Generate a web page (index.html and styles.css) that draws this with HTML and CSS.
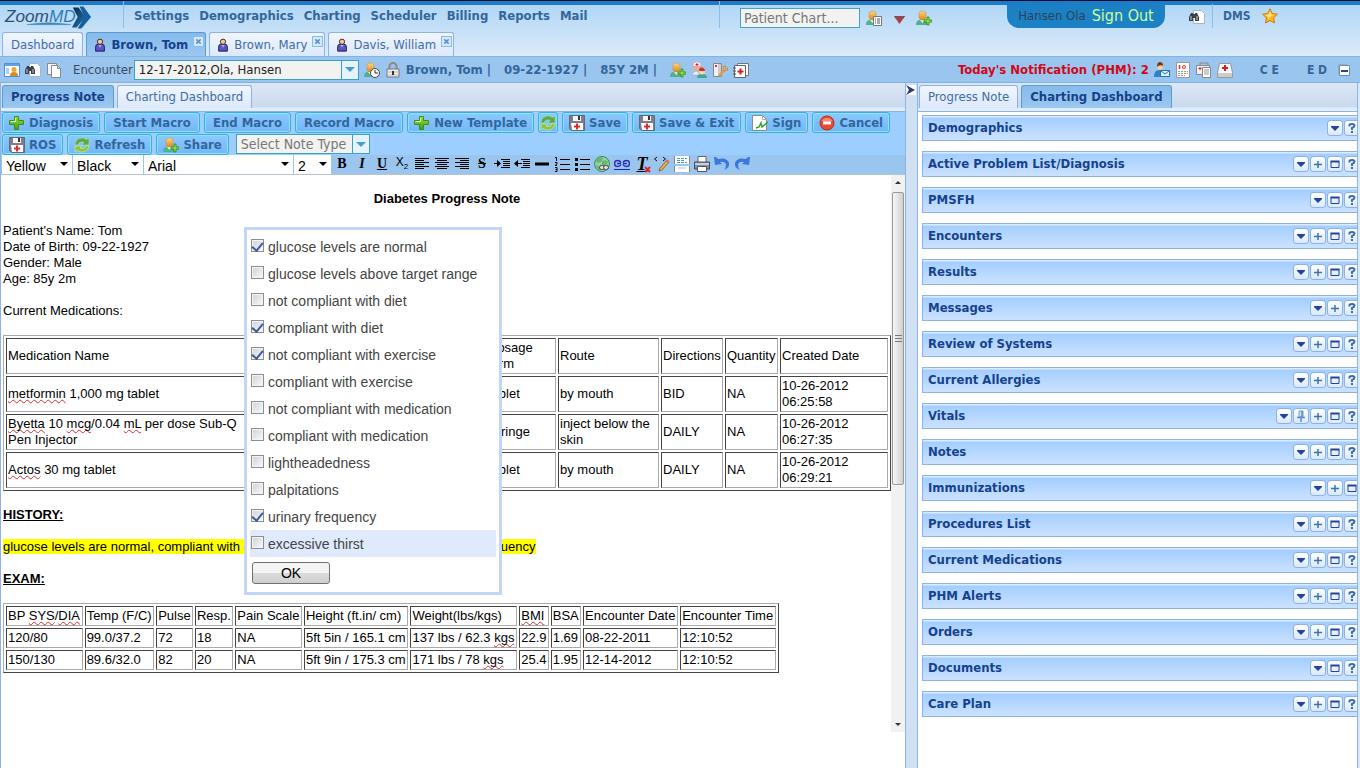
FILE: index.html
```html
<!DOCTYPE html>
<html lang="en">
<head>
<meta charset="utf-8">
<title>ZoomMD - Progress Note</title>
<link rel="stylesheet" href="styles.css">
</head>
<body>
<svg class="sprite" aria-hidden="true">
  <linearGradient id="gold" x1="0" y1="0" x2="0" y2="1"><stop offset="0" stop-color="#ffd488"/><stop offset="1" stop-color="#d98a1e"/></linearGradient>
  <linearGradient id="green" x1="0" y1="0" x2="0" y2="1"><stop offset="0" stop-color="#9be03f"/><stop offset="1" stop-color="#3aa010"/></linearGradient>
  <linearGradient id="navy" x1="0" y1="0" x2="1" y2="1"><stop offset="0" stop-color="#0c2038"/><stop offset="1" stop-color="#1f7fc0"/></linearGradient>
  <symbol id="person" viewBox="0 0 16 16"><path d="M3 15v-5q0-3 3-3h4q3 0 3 3v5z" fill="#5a55c4" stroke="#151540"/><path d="M6 8l2 3 2-3z" fill="#a9a6f0"/><circle cx="8" cy="4.300" r="3" fill="#f3c99a" stroke="#2a1a10"/></symbol>
  <symbol id="xmark" viewBox="0 0 10 10"><rect x=".5" y=".5" width="9" height="9" fill="#d9ebfc" stroke="#8dbce8"/><path d="M3 3l4 4M7 3l-4 4" stroke="#5a94d0" stroke-width="1.500"/></symbol>
  <symbol id="user" viewBox="0 0 16 16"><path d="M0 15q0-5 4-5h5q4 0 4 5z" fill="#4fb092"/><path d="M4 10l2.500 3L9 10z" fill="#e8f6f2"/><rect x="3" y="1" width="7" height="9" rx="3" fill="url(#gold)" stroke="#c98a35" stroke-width=".5"/></symbol>
  <symbol id="plusbadge" viewBox="0 0 16 16"><path d="M11 7h2v3h3v2h-3v3h-2v-3H8v-2h3z" fill="#8ee04a" stroke="#2e8a10" stroke-width=".8"/></symbol>
  <symbol id="useradd" viewBox="0 0 16 16"><use href="#user"/><use href="#plusbadge"/></symbol>
  <symbol id="userlist" viewBox="0 0 16 16"><use href="#user"/><path d="M7.500 6.500h8v9h-8z" fill="#fff" stroke="#777"/><path d="M9 9h1m1 0h3M9 11h1m1 0h3M9 13h1m1 0h3" stroke="#555"/></symbol>
  <symbol id="userclock" viewBox="0 0 16 16"><use href="#user"/><circle cx="11" cy="11" r="4.500" fill="#fff" stroke="#444"/><path d="M11 8v3h3" fill="none" stroke="#333"/></symbol>
  <symbol id="card" viewBox="0 0 16 16"><path d="M.5 1.500h15v13H.5z" fill="#f7fbff" stroke="#4b90d8"/><path d="M1 2h14v2H1z" fill="#5fa4ea"/><path d="M2 7h3M2 9h3M2 11h3" stroke="#69a7e0"/><circle cx="10" cy="7.500" r="2.500" fill="#eda62e"/><path d="M6 14q0-4 4-4t4 4z" fill="#d78c20"/></symbol>
  <symbol id="binoc" viewBox="0 0 16 16"><path d="M4.500 1.500h8l3 3v10h-11z" fill="#fff" stroke="#aab4c4"/><path d="M0 12V8l2-4h2v1h2V4h2l2 4v4H6V9H4v3z" fill="#3c404a"/><path d="M2 7v4M8 7v4" stroke="#c8ccd4"/></symbol>
  <symbol id="copy" viewBox="0 0 16 16"><path d="M1.500 1.500h9v11h-9z" fill="#f4f4f4" stroke="#8a8a8a"/><path d="M5.500 3.500h6l3 3v9h-9z" fill="#fff" stroke="#8a8a8a"/><path d="M11.500 3.500v3h3" fill="none" stroke="#8a8a8a"/></symbol>
  <symbol id="lock" viewBox="0 0 16 16"><path d="M4.500 8V4.500a3.500 3.500 0 0 1 7 0V8" fill="none" stroke="#8a8a8a" stroke-width="2"/><path d="M2 7h12v8H2z" fill="#eee" stroke="#777"/><path d="M3 10h10M3 13h10" stroke="#bbb"/><path d="M8 9v4" stroke="#333" stroke-width="2"/></symbol>
  <symbol id="nurse" viewBox="0 0 16 16"><circle cx="6" cy="5" r="4" fill="#f4a78f"/><path d="M2 4q0-4 4-4t4 4z" fill="#fff" stroke="#c99" stroke-width=".5"/><path d="M6 1v3M4.500 2.500h3" stroke="#d22"/><path d="M1 13q1-4 5-4l3 4z" fill="#eef" stroke="#99a" stroke-width=".5"/><path d="M6 16q0-4 5-4t5 4z" fill="#40a890"/><circle cx="11" cy="9.500" r="3" fill="#ffd5b0"/><path d="M8 9q0-4 3-3.500T14 9z" fill="#c43a2c"/></symbol>
  <symbol id="tools" viewBox="0 0 16 16"><path d="M1.500 1.500h8v13h-8z" fill="#f1f1f1" stroke="#888"/><path d="M6 2h3v12H6z" fill="#ccc"/><path d="M3 4h2" stroke="#d33" stroke-width="2"/><path d="M7 14l6-7" stroke="#de9c43" stroke-width="2.500"/><path d="M11 6q0-3 3-2l-1 2 1 1 2-1q0 3-3 3z" fill="#f0b65f" stroke="#a66d20" stroke-width=".5"/></symbol>
  <symbol id="notes" viewBox="0 0 16 16"><path d="M4.500 1.500h11v12h-11z" fill="#fff" stroke="#777"/><path d="M1.500 3.500h11v12h-11z" fill="#fff" stroke="#666"/><path d="M0 6h3M0 9h3M0 12h3" stroke="#555"/><path d="M7.500 6.500v6M4.500 9.500h6" stroke="#d61f1f" stroke-width="2"/></symbol>
  <symbol id="mailman" viewBox="0 0 16 16"><path d="M0 15q0-7 5-7t5 5v2z" fill="#2c84c8"/><circle cx="6" cy="5" r="3" fill="#f9cc9a"/><path d="M3 5q0-5 3-5t3 4q-3-2-6 1z" fill="#6e3d18"/><path d="M6.500 8.500h9v6h-9z" fill="#dff1ff" stroke="#2672b0"/><path d="M7 9l4 3 4-3" fill="none" stroke="#2672b0"/></symbol>
  <symbol id="iddoc" viewBox="0 0 16 16"><path d="M1.500.5h13v15h-13z" fill="#fbfbf5" stroke="#999"/><path d="M4.500 3v4" stroke="#d33" stroke-width="1.500"/><circle cx="9" cy="5" r="1.500" fill="none" stroke="#d33"/><path d="M3 9.500h10M3 11.500h10M3 13.500h7" stroke="#999" stroke-dasharray="2 1"/></symbol>
  <symbol id="docs" viewBox="0 0 16 16"><path d="M4 3V1h8v2" fill="none" stroke="#888"/><path d="M.5 3.500h13v9H.5z" fill="#eee" stroke="#888"/><path d="M4 5v3M2.500 6.500h3" stroke="#d22"/><path d="M6.500 5.500h8v10h-8z" fill="#fff" stroke="#888"/><path d="M8 8h5M8 10h5M8 12h5" stroke="#999"/></symbol>
  <symbol id="kit" viewBox="0 0 16 16"><path d="M2.500 1.500h11l2 9v5H.5v-5z" fill="#f7f7f7" stroke="#999"/><path d="M1 11h14v4H1z" fill="#ccc"/><path d="M8 3v6M5 6h6" stroke="#d61f1f" stroke-width="2"/></symbol>
  <symbol id="mini" viewBox="0 0 12 12"><path d="M.5.500h9v9h-9z" fill="#dceafa" stroke="#9ab"/><path d="M1.500 1.500h10v10h-10z" fill="#fff" stroke="#6a8fb8"/><path d="M3 7h7" stroke="#1b4b8a" stroke-width="2"/></symbol>
  <symbol id="plus" viewBox="0 0 16 16"><path d="M5.500 1.500h4v4h5v4h-5v5h-4v-5h-5v-4h5z" fill="url(#green)" stroke="#3f8f1c"/><path d="M6.500 3v3.500h-5" fill="none" stroke="#d4f7a8"/></symbol>
  <symbol id="floppy" viewBox="0 0 16 16"><path d="M.5.500h15v15H3l-2.500-2z" fill="#7c7f87" stroke="#66696f"/><path d="M4 1h8v5H4z" fill="#f4f4f4"/><path d="M9 1h2v4H9z" fill="#333"/><path d="M2 8h12v7H3z" fill="#fafafa"/><path d="M8 8.500v6M5 11.500h6" stroke="#d92c2c" stroke-width="2"/></symbol>
  <symbol id="refresh" viewBox="0 0 16 16"><path d="M1 8a7 7 0 0 1 11.500-5.500L15 1v7H8l2-2.500A4 4 0 0 0 4 8z" fill="#5aa846" stroke="#b4e69c" stroke-width=".6"/><path d="M15 8.500a7 7 0 0 1-11.500 5L1 15V9h7l-2 2a4 4 0 0 0 6-2.500z" fill="#8cc63f" stroke="#d2f2ae" stroke-width=".6"/></symbol>
  <symbol id="sign" viewBox="0 0 16 16"><path d="M.5.500h10l4 4v11H.5z" fill="#fff" stroke="#8b8b8b"/><path d="M10.500.5v4h4" fill="none" stroke="#aaa"/><path d="M4 13l3-1 2-4 1 4 6-5" fill="none" stroke="#2fa52f" stroke-width="1.500"/></symbol>
  <symbol id="stop" viewBox="0 0 16 16"><circle cx="8" cy="8" r="7" fill="#ea4a2d" stroke="#b32b18"/><path d="M2.500 6a6 5 0 0 1 11 0q-5 1-11 0z" fill="#f58a70"/><path d="M4 8h8" stroke="#fff" stroke-width="3"/></symbol>
  <symbol id="star" viewBox="0 0 16 16"><path d="M8 .8l2.200 4.700 5.200.7-3.800 3.600.9 5.200L8 12.500 3.500 15l.9-5.200L.6 6.200l5.200-.7z" fill="#ffb320" stroke="#d37b0c"/><path d="M8 3l1.500 3.500 3 .5q-5 1-6.500 5L6 9 3 7l3.500-.5z" fill="#ffe07a"/></symbol>
  <symbol id="left" viewBox="0 0 16 16"><path d="M1 2.500h14M1 4.500h9M1 6.500h14M1 8.500h9M1 10.500h14M1 12.500h9" stroke="#000"/></symbol>
  <symbol id="center" viewBox="0 0 16 16"><path d="M1 2.500h14M3 4.500h10M1 6.500h14M3 8.500h10M1 10.500h14M3 12.500h10" stroke="#000"/></symbol>
  <symbol id="right" viewBox="0 0 16 16"><path d="M1 2.500h14M6 4.500h9M1 6.500h14M6 8.500h9M1 10.500h14M6 12.500h9" stroke="#000"/></symbol>
  <symbol id="indent" viewBox="0 0 16 16"><path d="M0 7.500h4M7 3.500h9M9 5.500h7M9 7.500h7M9 9.500h7M7 11.500h9" stroke="#000"/><path d="M3 4l4 3.500L3 11z"/></symbol>
  <symbol id="outdent" viewBox="0 0 16 16"><path d="M3 7.500h5M7 3.500h9M9 5.500h7M9 7.500h7M9 9.500h7M7 11.500h9" stroke="#000"/><path d="M4 4L0 7.500 4 11z"/></symbol>
  <symbol id="rule" viewBox="0 0 16 16"><path d="M1 8h14" stroke="#000" stroke-width="3"/></symbol>
  <symbol id="ol" viewBox="0 0 16 16"><path d="M6 3.500h10M6 8.500h10M6 13.500h10" stroke="#000"/><path d="M1 1.500h1.500V5M1 6.500h2v1.500L1 9.500h2M1 11.500h2v4H1M1.500 13.500H3" fill="none" stroke="#000"/></symbol>
  <symbol id="ul" viewBox="0 0 16 16"><path d="M6 3.500h10M6 8.500h10M6 13.500h10" stroke="#000"/><path d="M1 2h3v3H1zM1 7h3v3H1zM1 12h3v3H1z"/></symbol>
  <symbol id="globe" viewBox="0 0 16 16"><circle cx="8" cy="8" r="7.500" fill="#8ed0b8" stroke="#3f8a5c"/><path d="M2 4q4-4 7-2l-2 4-4 1zM8 5q5-2 6 1l-2 4-4-1zM2 9l4 2v4q-4-2-4-6z" fill="#6cb85e"/><rect x="5.500" y="9.500" width="5" height="4" rx="2" fill="#ddd" stroke="#444"/><rect x="9.500" y="9.500" width="5" height="4" rx="2" fill="#ddd" stroke="#444"/></symbol>
  <symbol id="link" viewBox="0 0 16 16"><path d="M0 13.500h16" stroke="#1a1fd0"/><path d="M7 6.500Q6 4.500 3.500 4.500a3 3 0 0 0 0 6Q6 10.500 7 8.500M3 7.500h4M9 6.500q1-2 3.500-2a3 3 0 0 1 0 6q-2.500 0-3.500-2M9 7.500h4" fill="none" stroke="#2a2fb0" stroke-width="1.500"/></symbol>
  <symbol id="code" viewBox="0 0 16 16"><path d="M3 1L.5 3 3 5M9 1l2.500 2L9 5" fill="none" stroke="#111"/><path d="M5 15l1-3 7-8 2 2-7 8z" fill="#e8ae4e" stroke="#8a5a1c" stroke-width=".8"/><path d="M12.500 4l2 2" stroke="#d66" stroke-width="2"/></symbol>
  <symbol id="page" viewBox="0 0 16 16"><path d="M1 0h14v8H1zM1 10h14v6H1z" fill="#fff"/><path d="M3 2.500h10M3 4.500h8M3 6.500h10" stroke="#48a0a8" stroke-dasharray="3 1"/><path d="M.5 0v8M15.500 0v8M.5 10v6M15.500 10v6" stroke="#888"/><path d="M4 11h8v2H4z" fill="#ddd"/></symbol>
  <symbol id="print" viewBox="0 0 16 16"><path d="M4 .5h8v6H4z" fill="#fff" stroke="#666"/><path d="M.5 6h15v7H.5z" fill="#8791a3" stroke="#434b5a"/><path d="M1 7h14v2H1z" fill="#c7d0df"/><path d="M3.500 10.500h9v5h-9z" fill="#fff" stroke="#555"/></symbol>
  <symbol id="undo" viewBox="0 0 16 16"><path d="M0 1l1 8 7-1-2-2q5-1 6 3 0 3-2 5 6-2 5-7-2-6-11-4L2 1z" fill="#3b78dc"/></symbol>
  <symbol id="drop" viewBox="0 0 14 14"><path d="M3 5h8v1L7 10 3 6z" fill="#2344a0"/></symbol>
  <symbol id="add" viewBox="0 0 14 14"><path d="M7 4v7M3 7.500h8" stroke="#3f72b0" stroke-width="1.500"/></symbol>
  <symbol id="max" viewBox="0 0 14 14"><path d="M3 4.500h8v6H3z" fill="#e7f1fd" stroke="#2344a0"/><path d="M2.500 4.500h9" stroke="#2344a0" stroke-width="2"/></symbol>
  <symbol id="help" viewBox="0 0 14 14"><path d="M4.500 5.500V4q0-1 2.500-1t2.500 1.500T7 7v2" fill="none" stroke="#3f6ca8" stroke-width="2"/><path d="M6 10h2v2H6z" fill="#3f6ca8"/></symbol>
  <symbol id="pin" viewBox="0 0 14 14"><path d="M5 2h4v6H5z" fill="#d5e6fa" stroke="#6e9dd0"/><path d="M8 2v6M3 8.500h8M7 9v4" stroke="#5c8ec6" stroke-width="1.500"/></symbol>
</svg>

<header class="top">
  <div class="brand">
    <svg class="logo" viewBox="0 0 92 26" role="img" aria-label="ZoomMD"><text x="1" y="18" class="logo-text">Zoom<tspan class="logo-md">MD</tspan></text><path d="M24 21q22-4 46 0-24 0-46 0z" fill="#3d86b8" stroke="#3d86b8" stroke-width=".5"/><path d="M72 3h6l7 10-9 11h-5l6-11z" fill="url(#navy)"/><path d="M79 2h4l8 11-10 12h-4l7-12z" fill="#15609f"/></svg>
  </div>
  <nav class="menu">
    <a href="#">Settings</a><a href="#">Demographics</a><a href="#">Charting</a><a href="#">Scheduler</a><a href="#">Billing</a><a href="#">Reports</a><a href="#">Mail</a>
  </nav>
  <div class="search">
    <input type="text" placeholder="Patient Chart..." aria-label="Patient chart">
    <button class="ico" aria-label="Patient list"><svg><use href="#userlist"/></svg></button>
    <button class="ico" aria-label="More"><svg viewBox="0 0 16 16"><path d="M3 6h11l-5.500 8z" fill="#b8383c"/><path d="M3 6h11l-2 3H5z" fill="#8c4a52"/></svg></button>
    <button class="ico" aria-label="Add patient"><svg><use href="#useradd"/></svg></button>
  </div>
  <div class="account"><span>Hansen Ola</span><a href="#">Sign Out</a></div>
  <button class="ico find" aria-label="Find"><svg><use href="#binoc"/></svg></button>
  <div class="dms"><a href="#">DMS</a><button class="ico" aria-label="Favorites"><svg><use href="#star"/></svg></button></div>
</header>

<nav class="tabs patients">
  <a class="tab" href="#">Dashboard</a>
  <a class="tab active" href="#"><svg><use href="#person"/></svg>Brown, Tom<svg class="close"><use href="#xmark"/></svg></a>
  <a class="tab" href="#"><svg><use href="#person"/></svg>Brown, Mary<svg class="close"><use href="#xmark"/></svg></a>
  <a class="tab" href="#"><svg><use href="#person"/></svg>Davis, William<svg class="close"><use href="#xmark"/></svg></a>
</nav>

<section class="patientbar">
  <button class="ico" aria-label="Patient card"><svg><use href="#card"/></svg></button>
  <button class="ico" aria-label="Search"><svg><use href="#binoc"/></svg></button>
  <button class="ico" aria-label="Copy"><svg><use href="#copy"/></svg></button>
  <label class="enc-label" for="encounter">Encounter</label>
  <div class="combo enc"><select id="encounter"><option>12-17-2012,Ola, Hansen</option></select><span class="trigger"></span></div>
  <button class="ico" aria-label="History"><svg><use href="#userclock"/></svg></button>
  <button class="ico" aria-label="Lock"><svg><use href="#lock"/></svg></button>
  <div class="facts"><span>Brown, Tom |</span><span>09-22-1927 |</span><span>85Y 2M |</span></div>
  <button class="ico" aria-label="Add user"><svg><use href="#useradd"/></svg></button>
  <button class="ico" aria-label="Care team"><svg><use href="#nurse"/></svg></button>
  <button class="ico" aria-label="Tools"><svg><use href="#tools"/></svg></button>
  <button class="ico" aria-label="Notes"><svg><use href="#notes"/></svg></button>
  <strong class="notice">Today's Notification (PHM): 2</strong>
  <button class="ico" aria-label="Messages"><svg><use href="#mailman"/></svg></button>
  <button class="ico" aria-label="ID"><svg><use href="#iddoc"/></svg></button>
  <button class="ico" aria-label="Documents"><svg><use href="#docs"/></svg></button>
  <button class="ico" aria-label="Medical kit"><svg><use href="#kit"/></svg></button>
  <span class="codes"><a href="#">C E</a><a href="#">E D</a></span>
  <button class="ico mini" aria-label="Collapse"><svg><use href="#mini"/></svg></button>
</section>

<main class="work">
  <section class="left">
    <nav class="tabs strip">
      <a class="tab active" href="#">Progress Note</a>
      <a class="tab" href="#">Charting Dashboard</a>
    </nav>
    <div class="actions">
      <div class="row">
        <button class="act"><svg><use href="#plus"/></svg>Diagnosis</button>
        <button class="act text">Start Macro</button>
        <button class="act text">End Macro</button>
        <button class="act text">Record Macro</button>
        <button class="act"><svg><use href="#plus"/></svg>New Template</button>
        <button class="act only" aria-label="Reload"><svg><use href="#refresh"/></svg></button>
        <button class="act"><svg><use href="#floppy"/></svg>Save</button>
        <button class="act"><svg><use href="#floppy"/></svg>Save &amp; Exit</button>
        <button class="act"><svg><use href="#sign"/></svg>Sign</button>
        <button class="act"><svg><use href="#stop"/></svg>Cancel</button>
      </div>
      <div class="row">
        <button class="act"><svg><use href="#floppy"/></svg>ROS</button>
        <button class="act"><svg><use href="#refresh"/></svg>Refresh</button>
        <button class="act"><svg><use href="#useradd"/></svg>Share</button>
        <div class="combo type"><select aria-label="Note type"><option>Select Note Type</option></select><span class="trigger"></span></div>
      </div>
    </div>
    <div class="format">
      <div class="pick w70"><select aria-label="Highlight"><option>Yellow</option></select></div>
      <div class="pick w70"><select aria-label="Color"><option>Black</option></select></div>
      <div class="pick w149"><select aria-label="Font"><option>Arial</option></select></div>
      <div class="pick w37"><select aria-label="Size"><option>2</option></select></div>
      <div class="tools">
        <button class="letter"><b>B</b></button>
        <button class="letter"><i>I</i></button>
        <button class="letter"><u>U</u></button>
        <button class="letter sub">X<sub>2</sub></button>
        <button aria-label="Align left"><svg><use href="#left"/></svg></button>
        <button aria-label="Align center"><svg><use href="#center"/></svg></button>
        <button aria-label="Align right"><svg><use href="#right"/></svg></button>
        <button class="letter"><s>S</s></button>
        <button aria-label="Indent"><svg><use href="#indent"/></svg></button>
        <button aria-label="Outdent"><svg><use href="#outdent"/></svg></button>
        <button aria-label="Rule"><svg><use href="#rule"/></svg></button>
        <button aria-label="Numbered list"><svg><use href="#ol"/></svg></button>
        <button aria-label="Bulleted list"><svg><use href="#ul"/></svg></button>
        <button aria-label="Web link"><svg><use href="#globe"/></svg></button>
        <button aria-label="Link"><svg><use href="#link"/></svg></button>
        <button class="letter clear"><i>T</i><svg class="redx" viewBox="0 0 7 7"><path d="M1 1l5 5M6 1L1 6" stroke="#e02626" stroke-width="2"/></svg></button>
        <button aria-label="Source"><svg><use href="#code"/></svg></button>
        <button aria-label="Page break"><svg><use href="#page"/></svg></button>
        <button aria-label="Print"><svg><use href="#print"/></svg></button>
        <button aria-label="Undo"><svg><use href="#undo"/></svg></button>
        <button aria-label="Redo" class="flip"><svg><use href="#undo"/></svg></button>
      </div>
    </div>

    <div class="editor">
      <article class="doc">
        <h1>Diabetes Progress Note</h1>
        <p>Patient's Name: Tom<br>Date of Birth: 09-22-1927<br>Gender: Male<br>Age: 85y 2m</p>
        <p>Current Medications:</p>
        <table class="meds">
          <colgroup><col class="c-name"><col><col class="c-form"><col class="c-route"><col class="c-dir"><col class="c-qty"><col class="c-date"></colgroup>
          <tr><th>Medication Name</th><th></th><th>Dosage form</th><th>Route</th><th>Directions</th><th>Quantity</th><th>Created Date</th></tr>
          <tr><td><em>metformin</em> 1,000 mg tablet</td><td></td><td>tablet</td><td>by mouth</td><td>BID</td><td>NA</td><td>10-26-2012 06:25:58</td></tr>
          <tr><td><em>Byetta</em> 10 <em>mcg</em>/0.04 <em>mL</em> per dose Sub-Q<br>Pen Injector</td><td></td><td>syringe</td><td>inject below the skin</td><td>DAILY</td><td>NA</td><td>10-26-2012 06:27:35</td></tr>
          <tr><td><em>Actos</em> 30 mg tablet</td><td></td><td>tablet</td><td>by mouth</td><td>DAILY</td><td>NA</td><td>10-26-2012 06:29:21</td></tr>
        </table>
        <h2>HISTORY:</h2>
        <p><mark>glucose levels are normal, compliant with diet, not compliant with exercise, urinary frequency</mark></p>
        <h2>EXAM:</h2>
        <table class="exam">
          <tr><th>BP <em>SYS</em>/<em>DIA</em></th><th>Temp (F/C)</th><th>Pulse</th><th>Resp.</th><th>Pain Scale</th><th>Height (ft.in/ cm)</th><th>Weight(lbs/kgs)</th><th><em>BMI</em></th><th>BSA</th><th>Encounter Date</th><th>Encounter Time</th></tr>
          <tr><td>120/80</td><td>99.0/37.2</td><td>72</td><td>18</td><td>NA</td><td>5ft 5in / 165.1 cm</td><td>137 lbs / 62.3 <em>kgs</em></td><td>22.9</td><td>1.69</td><td>08-22-2011</td><td>12:10:52</td></tr>
          <tr><td>150/130</td><td>89.6/32.0</td><td>82</td><td>20</td><td>NA</td><td>5ft 9in / 175.3 cm</td><td>171 lbs / 78 <em>kgs</em></td><td>25.4</td><td>1.95</td><td>12-14-2012</td><td>12:10:52</td></tr>
        </table>
      </article>
      <div class="scroll" aria-hidden="true"><span class="up"></span><span class="thumb"></span><span class="down"></span></div>
      <form class="popup">
        <label><input type="checkbox" checked>glucose levels are normal</label>
        <label><input type="checkbox">glucose levels above target range</label>
        <label><input type="checkbox">not compliant with diet</label>
        <label><input type="checkbox" checked>compliant with diet</label>
        <label><input type="checkbox" checked>not compliant with exercise</label>
        <label><input type="checkbox">compliant with exercise</label>
        <label><input type="checkbox">not compliant with medication</label>
        <label><input type="checkbox">compliant with medication</label>
        <label><input type="checkbox">lightheadedness</label>
        <label><input type="checkbox">palpitations</label>
        <label><input type="checkbox" checked>urinary frequency</label>
        <label class="hover"><input type="checkbox">excessive thirst</label>
        <button type="button">OK</button>
      </form>
    </div>
  </section>

  <div class="splitter"><button aria-label="Expand panel"><svg viewBox="0 0 10 10"><path d="M0 0l9 5-9 5 3-5z" fill="#2b3a78"/></svg></button></div>

  <section class="side">
    <nav class="tabs strip">
      <a class="tab" href="#">Progress Note</a>
      <a class="tab active" href="#">Charting Dashboard</a>
    </nav>
    <div class="panels">
      <div class="panel"><h3>Demographics</h3><button aria-label="Menu"><svg><use href="#drop"/></svg></button><button aria-label="Help"><svg><use href="#help"/></svg></button></div>
      <div class="panel"><h3>Active Problem List/Diagnosis</h3><button aria-label="Menu"><svg><use href="#drop"/></svg></button><button aria-label="Add"><svg><use href="#add"/></svg></button><button aria-label="Maximize"><svg><use href="#max"/></svg></button><button aria-label="Help"><svg><use href="#help"/></svg></button></div>
      <div class="panel"><h3>PMSFH</h3><button aria-label="Menu"><svg><use href="#drop"/></svg></button><button aria-label="Maximize"><svg><use href="#max"/></svg></button><button aria-label="Help"><svg><use href="#help"/></svg></button></div>
      <div class="panel"><h3>Encounters</h3><button aria-label="Menu"><svg><use href="#drop"/></svg></button><button aria-label="Add"><svg><use href="#add"/></svg></button><button aria-label="Maximize"><svg><use href="#max"/></svg></button><button aria-label="Help"><svg><use href="#help"/></svg></button></div>
      <div class="panel"><h3>Results</h3><button aria-label="Menu"><svg><use href="#drop"/></svg></button><button aria-label="Add"><svg><use href="#add"/></svg></button><button aria-label="Maximize"><svg><use href="#max"/></svg></button><button aria-label="Help"><svg><use href="#help"/></svg></button></div>
      <div class="panel"><h3>Messages</h3><button aria-label="Menu"><svg><use href="#drop"/></svg></button><button aria-label="Add"><svg><use href="#add"/></svg></button><button aria-label="Help"><svg><use href="#help"/></svg></button></div>
      <div class="panel"><h3>Review of Systems</h3><button aria-label="Menu"><svg><use href="#drop"/></svg></button><button aria-label="Add"><svg><use href="#add"/></svg></button><button aria-label="Maximize"><svg><use href="#max"/></svg></button><button aria-label="Help"><svg><use href="#help"/></svg></button></div>
      <div class="panel"><h3>Current Allergies</h3><button aria-label="Menu"><svg><use href="#drop"/></svg></button><button aria-label="Add"><svg><use href="#add"/></svg></button><button aria-label="Maximize"><svg><use href="#max"/></svg></button><button aria-label="Help"><svg><use href="#help"/></svg></button></div>
      <div class="panel"><h3>Vitals</h3><button aria-label="Menu"><svg><use href="#drop"/></svg></button><button aria-label="Pin"><svg><use href="#pin"/></svg></button><button aria-label="Add"><svg><use href="#add"/></svg></button><button aria-label="Maximize"><svg><use href="#max"/></svg></button><button aria-label="Help"><svg><use href="#help"/></svg></button></div>
      <div class="panel"><h3>Notes</h3><button aria-label="Menu"><svg><use href="#drop"/></svg></button><button aria-label="Add"><svg><use href="#add"/></svg></button><button aria-label="Maximize"><svg><use href="#max"/></svg></button><button aria-label="Help"><svg><use href="#help"/></svg></button></div>
      <div class="panel"><h3>Immunizations</h3><button aria-label="Menu"><svg><use href="#drop"/></svg></button><button aria-label="Add"><svg><use href="#add"/></svg></button><button aria-label="Maximize"><svg><use href="#max"/></svg></button></div>
      <div class="panel"><h3>Procedures List</h3><button aria-label="Menu"><svg><use href="#drop"/></svg></button><button aria-label="Add"><svg><use href="#add"/></svg></button><button aria-label="Maximize"><svg><use href="#max"/></svg></button><button aria-label="Help"><svg><use href="#help"/></svg></button></div>
      <div class="panel"><h3>Current Medications</h3><button aria-label="Menu"><svg><use href="#drop"/></svg></button><button aria-label="Add"><svg><use href="#add"/></svg></button><button aria-label="Maximize"><svg><use href="#max"/></svg></button><button aria-label="Help"><svg><use href="#help"/></svg></button></div>
      <div class="panel"><h3>PHM Alerts</h3><button aria-label="Menu"><svg><use href="#drop"/></svg></button><button aria-label="Add"><svg><use href="#add"/></svg></button><button aria-label="Maximize"><svg><use href="#max"/></svg></button><button aria-label="Help"><svg><use href="#help"/></svg></button></div>
      <div class="panel"><h3>Orders</h3><button aria-label="Menu"><svg><use href="#drop"/></svg></button><button aria-label="Add"><svg><use href="#add"/></svg></button><button aria-label="Maximize"><svg><use href="#max"/></svg></button><button aria-label="Help"><svg><use href="#help"/></svg></button></div>
      <div class="panel"><h3>Documents</h3><button aria-label="Menu"><svg><use href="#drop"/></svg></button><button aria-label="Maximize"><svg><use href="#max"/></svg></button><button aria-label="Help"><svg><use href="#help"/></svg></button></div>
      <div class="panel"><h3>Care Plan</h3><button aria-label="Menu"><svg><use href="#drop"/></svg></button><button aria-label="Add"><svg><use href="#add"/></svg></button><button aria-label="Maximize"><svg><use href="#max"/></svg></button><button aria-label="Help"><svg><use href="#help"/></svg></button></div>
    </div>
  </section>
</main>
</body>
</html>
```

FILE: styles.css
```css
* { box-sizing: border-box; }

body {
  margin: 0;
  min-height: 100vh;
  display: flex;
  flex-direction: column;
  background: #d6e9fa;
  font: 13px/16px "DejaVu Sans Condensed", "Noto Sans", sans-serif;
  color: #3a4a5e;
  white-space: nowrap;
}

a { color: inherit; text-decoration: none; }
button, input, select { font: inherit; color: inherit; margin: 0; }
button { padding: 0; border: 0; background: none; }
h1, h2, h3, p { margin: 0; }
svg { display: block; width: 16px; height: 16px; flex: none; }
.sprite { position: absolute; width: 0; height: 0; }
.ico { display: grid; place-items: center; width: 16px; flex: none; }

/* Top bar */
.top {
  display: flex;
  height: 32px;
  border-top: 1px solid #060a28;
  background: linear-gradient(#1c7cc7 0 4px, #b0d6f6 4px, #c8e1f8);
}
.brand { width: 124px; padding: 3px 0 0 4px; border-right: 1px solid #8dbce4; margin-bottom: 4px; }
.logo { width: 88px; height: 26px; }
.logo-text { font: italic 18px "Liberation Sans", sans-serif; fill: #2c4f74; }
.logo-md { fill: #2f7db4; }
.menu { display: flex; gap: 10px; flex: 0 0 596px; padding: 7px 0 0 10px; margin-bottom: 4px; border-right: 1px solid #8dbce4; font-weight: bold; color: #33669a; }
.search { display: flex; align-items: center; gap: 9px; flex: 1; padding: 3px 0 0 20px; }
.search input { width: 120px; height: 20px; margin-right: -3px; padding: 0 3px; border: 1px solid #4a9fc8; background: #f2f2f0; font-size: 14px; color: #777; }
.search input::placeholder { color: #777; opacity: 1; }
.account { display: flex; justify-content: center; align-items: center; gap: 6px; width: 158px; margin: 3px 0 4px; background: #1c80c4; border-radius: 0 0 12px 12px; color: #2c4358; }
.account a { font-size: 16px; color: #c8ff96; }
.find { margin: 0 7px 0 24px; }
.dms { display: flex; align-items: center; gap: 11px; width: 148px; padding-left: 10px; margin: 3px 0 4px; border-left: 1px solid #8dbce4; font-weight: bold; font-size: 12px; color: #33669a; }

/* Tabs */
.tabs { display: flex; gap: 3px; }
.tab { display: flex; align-items: center; gap: 4px; padding: 0 8px; border: 1px solid #8db2e3; border-bottom: 0; border-radius: 3px 3px 0 0; background: linear-gradient(#f0f6ff, #dce8fb); color: #416da3; }
.tab.active { background: linear-gradient(#85bceb, #9cc6f0); border-color: #5c9bd4; color: #15428b; font-weight: bold; }
.patients { height: 24px; padding: 0 2px; background: linear-gradient(#c8e1f8, #dbecfa); }
.patients .tab svg { width: 14px; height: 14px; margin-left: -2px; }
.patients .tab .close { width: 11px; height: 11px; margin: 0 -7px 7px 1px; }

/* Patient bar */
.patientbar { display: flex; align-items: center; gap: 5px; height: 27px; padding: 0 8px 0 4px; border-top: 1px solid #83b3df; border-bottom: 1px solid #83b0df; background: #9ac5ee; }
.enc-label { margin-left: 6px; }
.combo { position: relative; border: 1px solid #3d9fc4; background: #f2f2f0; }
.combo select { width: 100%; height: 100%; padding: 0 4px; border: 0; background: none; appearance: none; }
.trigger { position: absolute; top: 0; right: 0; display: grid; place-items: center; width: 17px; height: 100%; border-left: 1px solid #3d9fc4; background: #e6f3fc; pointer-events: none; }
.trigger::after { content: ""; border: 5px solid transparent; border-top-color: #4a9fca; border-bottom: 0; }
.enc { width: 225px; height: 20px; margin-left: -4px; color: #222; }
.facts { display: flex; gap: 13px; padding: 0 8px 0 0; font-weight: bold; color: #33669a; }
.notice { margin-left: auto; color: #d00818; }
.codes { display: flex; gap: 28px; margin: 0 4px 0 22px; font-weight: bold; font-size: 12px; color: #33669a; }
.mini svg { width: 12px; height: 12px; }

/* Work area */
.work { display: grid; grid-template-columns: 905fr 12px 441fr; flex: 1; padding-right: 2px; }
.left, .side { display: flex; flex-direction: column; min-width: 0; background: #fff; }
.left { border-left: 1px solid #8db2e3; }
.side { border-right: 1px solid #8db2e3; border-left: 1px solid #8db2e3; overflow: hidden; }
.strip { height: 29px; padding: 2px 1px 3px; border-bottom: 1px solid #8db2e3; background: linear-gradient(#dce7f5, #cad9ee 24px, #e0edfb 25px); }
.splitter { border-left: 1px solid #8db2e3; background: #d0e0f3; }
.splitter button { width: 10px; background: #fff; }
.splitter svg { width: 10px; height: 10px; }

/* Note actions */
.actions { display: flex; flex-direction: column; gap: 1px; padding: 0 1px; background: #9cceff; }
.row { display: flex; gap: 4px; height: 21px; }
.act { display: flex; align-items: center; gap: 4px; padding: 1px 6px 0; border: 1px solid #3aaedc; border-radius: 3px; box-shadow: inset 0 0 0 1px #8fe0fa; background: linear-gradient(#8ccaff, #72b6f8); color: #33669a; font-weight: bold; }
.act.text { padding: 1px 8px 0; }
.act.only { padding: 0 1px; }
.type { width: 134px; height: 20px; margin-left: 3px; font-size: 14px; color: #777; }

/* Formatting bar */
.format { display: flex; height: 20px; gap: 1px; padding-left: 1px; background: #9ac5ee; font: 14px/18px "Liberation Sans", Arial, sans-serif; color: #000; border-bottom: 1px solid #b8c4d0; }
.pick { position: relative; background: #fff; }
.pick select { width: 100%; height: 100%; padding: 2px 4px 0; border: 0; background: none; appearance: none; }
.pick::after { content: ""; position: absolute; right: 4px; top: 7px; border: 4px solid transparent; border-top-color: #000; border-bottom: 0; pointer-events: none; }
.w70 { width: 70px; }
.w149 { width: 149px; }
.w37 { width: 37px; }
.tools { display: flex; height: 17px; }
.tools button { position: relative; display: grid; place-items: center; width: 20px; }
.letter { font: bold 14px/16px "Liberation Serif", serif; }
.tools .sub { display: block; font: 12px/14px "Liberation Sans", sans-serif; }
.sub sub { font-size: 8px; }
.clear i { font-size: 18px; text-decoration: underline; }
.redx { position: absolute; right: 1px; bottom: -1px; width: 7px; height: 7px; }
.flip svg { transform: scaleX(-1); }

/* Document */
.editor { position: relative; display: flex; height: 557px; font: 13px/16px "Liberation Sans", Arial, sans-serif; color: #000; }
.doc { flex: 1; min-width: 0; padding: 16px 0 0 2px; white-space: normal; }
.doc h1, .doc h2 { font-size: 13px; line-height: 16px; }
.doc h1 { text-align: center; }
.doc h1, .doc p, .doc h2, .meds { margin-bottom: 16px; }
.doc h2 { text-decoration: underline; }
.doc em { font-style: normal; text-decoration: underline wavy #d03030 1px; text-underline-offset: 1px; text-decoration-skip-ink: none; }
mark { background: #ff0; color: inherit; }
table { border: 1px solid; border-color: #aaa #444 #444 #aaa; border-spacing: 2px; }
th, td { padding: 1px; border: 1px solid; border-color: #444 #aaa #aaa #444; font-weight: normal; text-align: left; }
.meds { width: 100%; table-layout: fixed; }
.meds tr { height: 36px; }
.c-name { width: 250px; }
.c-form { width: 70px; }
.c-route { width: 101px; }
.c-dir { width: 62px; }
.c-qty { width: 53px; }
.c-date { width: 108px; }
.exam { width: 776px; white-space: nowrap; }

.scroll { display: flex; flex-direction: column; width: 14px; padding: 6px 1px; background: #f1f1f1; }
.up, .down { align-self: center; border: 3px solid transparent; }
.up { border-bottom-color: #333; border-top: 0; }
.down { border-top-color: #333; border-bottom: 0; margin-top: auto; }
.thumb { height: 293px; margin-top: 8px; border: 1px solid #999; border-radius: 2px; background: repeating-linear-gradient(#777 0 1px, transparent 1px 3px) center / 7px 7px no-repeat, linear-gradient(90deg, #f7f7f7, #cfcfcf); }

/* Symptom picker */
.popup { position: absolute; left: 243px; top: 52px; width: 258px; padding: 3px 3px 8px; border: 3px solid #c3d6f8; background: #fff; font-size: 14px; color: #444; }
.popup label { display: flex; align-items: center; gap: 4px; height: 27px; padding: 0 1px; }
.popup .hover { background: #dfebfc; }
.popup input { display: grid; place-items: center; width: 13px; height: 13px; margin-bottom: 3px; border: 1px solid #8a8f96; appearance: none; background: linear-gradient(135deg, #cdd1d6, #fafafa); box-shadow: inset 0 0 0 1px #f4f4f4; }
.popup input:checked::after { content: ""; width: 5px; height: 9px; margin-bottom: 2px; border: solid #3c5a9c; border-width: 0 2px 2px 0; transform: rotate(40deg); }
.popup button { display: block; width: 78px; height: 22px; margin: 5px 0 0 2px; border: 1px solid #707070; border-radius: 3px; background: linear-gradient(#f4f4f4 50%, #dcdcdc 50%, #cfcfcf); color: #000; }

/* Dashboard panels */
.panels { display: flex; flex-direction: column; gap: 10px; padding: 3px 0 0 4px; }
.panel { display: flex; align-items: center; gap: 3px; height: 26px; padding-left: 5px; margin-right: -3px; border: 1px solid #8db2e3; background: linear-gradient(#dcecff 1px, #a4ceff 2px, #cbe2ff); overflow: hidden; }
.panel h3 { flex: 1; font-size: 13px; color: #15428b; }
.panel button { width: 14px; height: 14px; flex: none; border-radius: 3px; background: linear-gradient(#fff, #d9e9fc); box-shadow: 0 0 0 1px #8db2e3; }
.panel button svg { width: 14px; height: 14px; }
```
